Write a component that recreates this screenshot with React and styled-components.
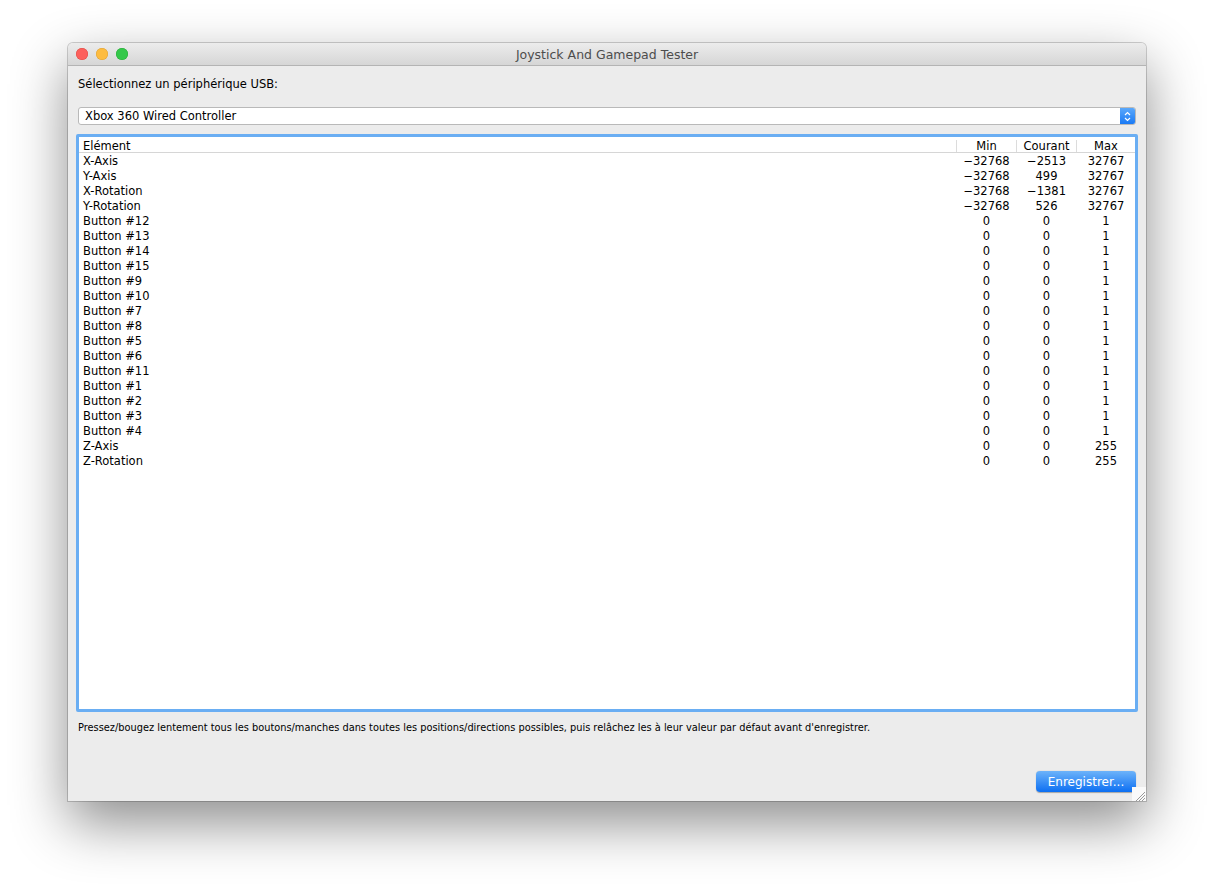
import React from "react";
import styled, { createGlobalStyle } from "styled-components";

const GlobalStyle = createGlobalStyle`
  html, body {
    margin: 0;
    padding: 0;
    background: #ffffff;
  }
  body {
    font-family: "DejaVu Sans", "Liberation Sans", sans-serif;
    color: #000;
  }
`;

const Page = styled.div`
  padding: 43px 0 0 68px;
  width: 1214px;
  height: 893px;
  box-sizing: border-box;
`;

const Window = styled.div`
  width: 1078px;
  height: 758px;
  display: flex;
  flex-direction: column;
  background: #ececec;
  border-radius: 5px 5px 0 0;
  box-shadow: 0 0 0 1px rgba(0, 0, 0, 0.18), 0 22px 55px rgba(0, 0, 0, 0.45);
  overflow: hidden;
  position: relative;
`;

const TitleBar = styled.div`
  height: 22px;
  flex: none;
  display: flex;
  align-items: center;
  position: relative;
  background: linear-gradient(#ececec, #d6d6d6);
  border-bottom: 1px solid #b4b4b4;
`;

const Lights = styled.div`
  display: flex;
  gap: 8px;
  padding-left: 8px;
`;

const Light = styled.span`
  width: 12px;
  height: 12px;
  border-radius: 50%;
  background: ${(p) => p.$color};
  box-shadow: inset 0 0 0 0.5px ${(p) => p.$edge};
`;

const Title = styled.div`
  position: absolute;
  left: 0;
  right: 0;
  text-align: center;
  font-size: 12.5px;
  color: #4d4d4d;
`;

const Body = styled.div`
  flex: 1;
  display: flex;
  flex-direction: column;
  padding: 0 10px;
`;

const Label = styled.div`
  font-size: 11.5px;
  margin-top: 11px;
  height: 15px;
  line-height: 15px;
`;

const Combo = styled.div`
  margin-top: 15px;
  height: 16px;
  display: flex;
  align-items: stretch;
  background: #fff;
  border: 1px solid #b9b9b9;
  border-radius: 3px;
  font-size: 11.5px;
  overflow: hidden;
`;

const ComboText = styled.div`
  flex: 1;
  line-height: 16px;
  padding-left: 6px;
`;

const ComboArrow = styled.div`
  width: 15px;
  display: flex;
  align-items: center;
  justify-content: center;
  background: linear-gradient(#5aa8fb, #1a7af5);
`;

const TableFrame = styled.div`
  margin: 9px -2px 0;
  height: 578px;
  box-sizing: border-box;
  border: 3px solid #6aaef3;
  border-radius: 2px;
  background: #fff;
  display: flex;
  flex-direction: column;
  font-size: 11.5px;
`;

const Grid = styled.div`
  display: grid;
  grid-template-columns: 1fr 60px 60px 59px;
`;

const HeaderRow = styled(Grid)`
  margin-top: 1px;
  height: 15px;
  box-sizing: border-box;
  padding-top: 2px;
  line-height: 12px;
  border-bottom: 1px solid #d6d6d6;
`;

const HeadCell = styled.div`
  text-align: ${(p) => (p.$left ? "left" : "center")};
  padding-left: ${(p) => (p.$left ? "4px" : "0")};
  border-left: ${(p) => (p.$left ? "none" : "1px solid #dcdcdc")};
`;

const Row = styled(Grid)`
  height: 15px;
  box-sizing: border-box;
  padding-top: 1px;
  line-height: 14px;
`;

const Cell = styled.div`
  text-align: ${(p) => (p.$left ? "left" : "center")};
  padding-left: ${(p) => (p.$left ? "4px" : "1px")};
  white-space: pre;
`;

const Hint = styled.div`
  font-size: 9.8px;
  margin-top: 10px;
  line-height: 12px;
`;

const Footer = styled.div`
  margin-top: auto;
  display: flex;
  justify-content: flex-end;
  padding-bottom: 9px;
`;

const Button = styled.button`
  width: 100px;
  height: 21px;
  border: none;
  border-radius: 4px;
  background: linear-gradient(#6cb3fa, #0d6ff2);
  color: #fff;
  font-family: inherit;
  font-size: 12px;
  padding: 0;
  box-shadow: 0 0.5px 1px rgba(0, 0, 0, 0.3);
`;

const Grip = styled.div`
  position: absolute;
  right: 0;
  bottom: 0;
  width: 14px;
  height: 14px;
  background: #fafafa;
`;

const rows = [
  ["X-Axis", "\u221232768", "\u22122513", "32767"],
  ["Y-Axis", "\u221232768", "499", "32767"],
  ["X-Rotation", "\u221232768", "\u22121381", "32767"],
  ["Y-Rotation", "\u221232768", "526", "32767"],
  ["Button #12", "0", "0", "1"],
  ["Button #13", "0", "0", "1"],
  ["Button #14", "0", "0", "1"],
  ["Button #15", "0", "0", "1"],
  ["Button #9", "0", "0", "1"],
  ["Button #10", "0", "0", "1"],
  ["Button #7", "0", "0", "1"],
  ["Button #8", "0", "0", "1"],
  ["Button #5", "0", "0", "1"],
  ["Button #6", "0", "0", "1"],
  ["Button #11", "0", "0", "1"],
  ["Button #1", "0", "0", "1"],
  ["Button #2", "0", "0", "1"],
  ["Button #3", "0", "0", "1"],
  ["Button #4", "0", "0", "1"],
  ["Z-Axis", "0", "0", "255"],
  ["Z-Rotation", "0", "0", "255"],
];

const App = () => {
  return (
    <>
      <GlobalStyle />
      <Page>
        <Window>
          <TitleBar>
            <Lights>
              <Light $color="#fc605c" $edge="#de4a44" />
              <Light $color="#fdbc40" $edge="#dea034" />
              <Light $color="#34c84a" $edge="#27aa35" />
            </Lights>
            <Title>Joystick And Gamepad Tester</Title>
          </TitleBar>
          <Body>
            <Label>Sélectionnez un périphérique USB:</Label>
            <Combo>
              <ComboText>Xbox 360 Wired Controller</ComboText>
              <ComboArrow>
                <svg width="7" height="11" viewBox="0 0 7 11">
                  <path d="M1 4 L3.5 1.5 L6 4 M1 7 L3.5 9.5 L6 7" fill="none" stroke="#fff" strokeWidth="1.2" />
                </svg>
              </ComboArrow>
            </Combo>
            <TableFrame>
              <HeaderRow>
                <HeadCell $left>Elément</HeadCell>
                <HeadCell>Min</HeadCell>
                <HeadCell>Courant</HeadCell>
                <HeadCell>Max</HeadCell>
              </HeaderRow>
              {rows.map((r, i) => (
                <Row key={i}>
                  <Cell $left>{r[0]}</Cell>
                  <Cell>{r[1]}</Cell>
                  <Cell>{r[2]}</Cell>
                  <Cell>{r[3]}</Cell>
                </Row>
              ))}
            </TableFrame>
            <Hint>
              Pressez/bougez lentement tous les boutons/manches dans toutes les positions/directions possibles, puis relâchez les à leur valeur par défaut avant d'enregistrer.
            </Hint>
            <Footer>
              <Button>Enregistrer...</Button>
            </Footer>
          </Body>
          <Grip>
            <svg width="14" height="14" viewBox="0 0 14 14">
              <path d="M13 4 L4 13 M13 7 L7 13 M13 10 L10 13" stroke="#9a9a9a" strokeWidth="1" />
            </svg>
          </Grip>
        </Window>
      </Page>
    </>
  );
};

export default App;
